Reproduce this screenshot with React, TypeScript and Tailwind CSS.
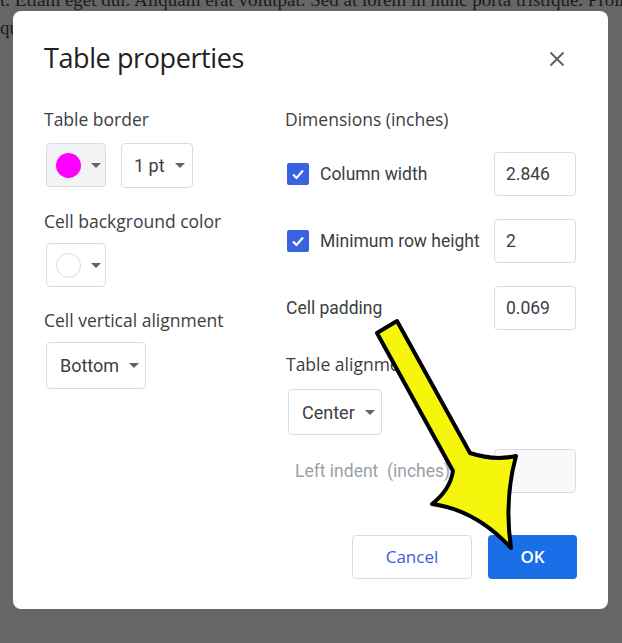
import React from "react";

const Caret = () => (
  <span className="ml-[10px] inline-block h-0 w-0 border-x-[5px] border-t-[5px] border-x-transparent border-t-[#5f6368]" />
);

const Check = () => (
  <span className="ml-[2px] flex h-[22px] w-[22px] items-center justify-center rounded-[2px] bg-[#3862e0]">
    <svg width="16" height="16" viewBox="0 0 16 16">
      <path d="M3 8.5 L6.5 12 L13 4.5" fill="none" stroke="#fff" strokeWidth="2.2" />
    </svg>
  </span>
);

const Field = ({ value, disabled }: { value: string; disabled?: boolean }) => (
  <div
    className={
      "flex h-[44px] w-[82px] items-center rounded-[4px] border border-[#dadce0] px-[11px] text-[17.5px] text-[#3c4043] " +
      (disabled ? "bg-[#f8f9fa]" : "bg-white")
    }
  >
    {value}
  </div>
);

const Label = ({ children }: { children: React.ReactNode }) => (
  <div className="h-[24px] whitespace-nowrap text-[17.5px] font-medium leading-[24px] text-[#3c4043] [font-family:'Open_Sans',sans-serif]">
    {children}
  </div>
);

const Arrow = () => (
  <svg className="pointer-events-none absolute left-0 top-0" width="622" height="643" viewBox="0 0 622 643">
    <path
      d="M377 333 L397 321 L470 453 Q494 461 516 456 Q504 500 511 548 Q476 510 432 504 Q450 490 453 471 Z"
      fill="#f6f60c"
      stroke="#000"
      strokeWidth="4"
      strokeLinejoin="round"
    />
  </svg>
);

export default function App() {
  return (
    <div className="relative h-[643px] w-[622px] overflow-hidden bg-[#666666] [font-family:Roboto,sans-serif]">
      {/* dimmed document behind the dialog */}
      <div className="relative text-[#1b1b1b] [font-family:'Liberation_Serif',serif]">
        <div className="-mt-[11px] whitespace-nowrap text-[19px] leading-[22px]">
          t. Etiam eget dui. Aliquam erat volutpat. Sed at lorem in nunc porta tristique. Proin n
        </div>
        <div className="mt-[6px] whitespace-nowrap text-[19px] leading-[22px]">qua</div>
        <span className="absolute left-[132px] top-[-6px] h-[10px] w-[10px] rotate-45 bg-[#2f3f9a]" />
        <span className="absolute left-[455px] top-[-6px] h-[10px] w-[10px] rotate-45 bg-[#2f3f9a]" />
      </div>

      <div className="absolute left-[13px] top-[11px] flex h-[598px] w-[595px] flex-col rounded-[8px] bg-white pl-[31px] pr-[32px] pt-[30px]">
        <div className="flex items-center justify-between">
          <div className="h-[34px] text-[27px] leading-[34px] text-[#202124] [font-family:'Open_Sans',sans-serif] tracking-[-0.4px]">
            Table properties
          </div>
          <svg width="16" height="16" viewBox="0 0 16 16" className="mr-[11px] mt-[2px]">
            <path d="M1.5 1.5 L14.5 14.5 M14.5 1.5 L1.5 14.5" stroke="#5f6368" strokeWidth="2" />
          </svg>
        </div>

        <div className="mt-[32px] flex">
          <div className="flex w-[241px] flex-col">
            <Label>Table border</Label>
            <div className="mt-[12px] flex gap-[15px]">
              <div className="ml-[2px] flex h-[44px] w-[60px] items-center rounded-[4px] border border-[#dadce0] bg-[#f1f3f4] pl-[9px]">
                <span className="h-[25px] w-[25px] rounded-full bg-[#ff00ff]" />
                <Caret />
              </div>
              <div className="flex h-[45px] w-[72px] items-center rounded-[4px] border border-[#dadce0] pl-[12px] text-[18px] text-[#3c4043]">
                1 pt
                <Caret />
              </div>
            </div>
            <div className="mt-[21px]">
              <Label>Cell background color</Label>
            </div>
            <div className="ml-[2px] mt-[10px] flex h-[44px] w-[60px] items-center rounded-[4px] border border-[#dadce0] bg-white pl-[9px]">
              <span className="h-[25px] w-[25px] rounded-full border border-[#dadce0] bg-white" />
              <Caret />
            </div>
            <div className="mt-[21px]">
              <Label>Cell vertical alignment</Label>
            </div>
            <div className="ml-[2px] mt-[10px] flex h-[47px] w-[100px] items-center rounded-[4px] border border-[#dadce0] pl-[13px] text-[18px] text-[#3c4043]">
              Bottom
              <Caret />
            </div>
          </div>

          <div className="flex flex-1 flex-col">
            <Label>Dimensions (inches)</Label>
            <div className="mt-[21px] flex items-center justify-between">
              <div className="flex items-center gap-[11px] text-[17.5px] text-[#3c4043]">
                <Check />
                Column width
              </div>
              <Field value="2.846" />
            </div>
            <div className="mt-[23px] flex items-center justify-between">
              <div className="flex items-center gap-[11px] text-[17.5px] text-[#3c4043]">
                <Check />
                Minimum row height
              </div>
              <Field value="2" />
            </div>
            <div className="mt-[23px] flex items-center justify-between">
              <div className="pl-[1px] text-[17.5px] text-[#3c4043]">Cell padding</div>
              <Field value="0.069" />
            </div>
            <div className="mt-[22px] pl-[1px]">
              <Label>Table alignment</Label>
            </div>
            <div className="ml-[3px] mt-[13px] flex h-[46px] w-[94px] items-center rounded-[4px] border border-[#dadce0] pl-[13px] text-[18px] text-[#3c4043]">
              Center
              <Caret />
            </div>
            <div className="mt-[14px] flex items-center justify-between">
              <div className="pl-[10px] text-[17.5px] text-[#9aa0a6]">Left indent&nbsp; (inches)</div>
              <Field value="" disabled />
            </div>
            <div className="mt-[42px] flex justify-end gap-[16px]">
              <button className="h-[44px] w-[120px] rounded-[4px] border border-[#dadce0] bg-white text-[17px] font-medium text-[#3f5bd8] [font-family:'Open_Sans',sans-serif]">
                Cancel
              </button>
              <button className="mr-[-1px] h-[44px] w-[89px] rounded-[4px] bg-[#1a6fe8] text-[17px] font-semibold text-white [font-family:'Open_Sans',sans-serif]">
                OK
              </button>
            </div>
          </div>
        </div>
      </div>

      <Arrow />
    </div>
  );
}
